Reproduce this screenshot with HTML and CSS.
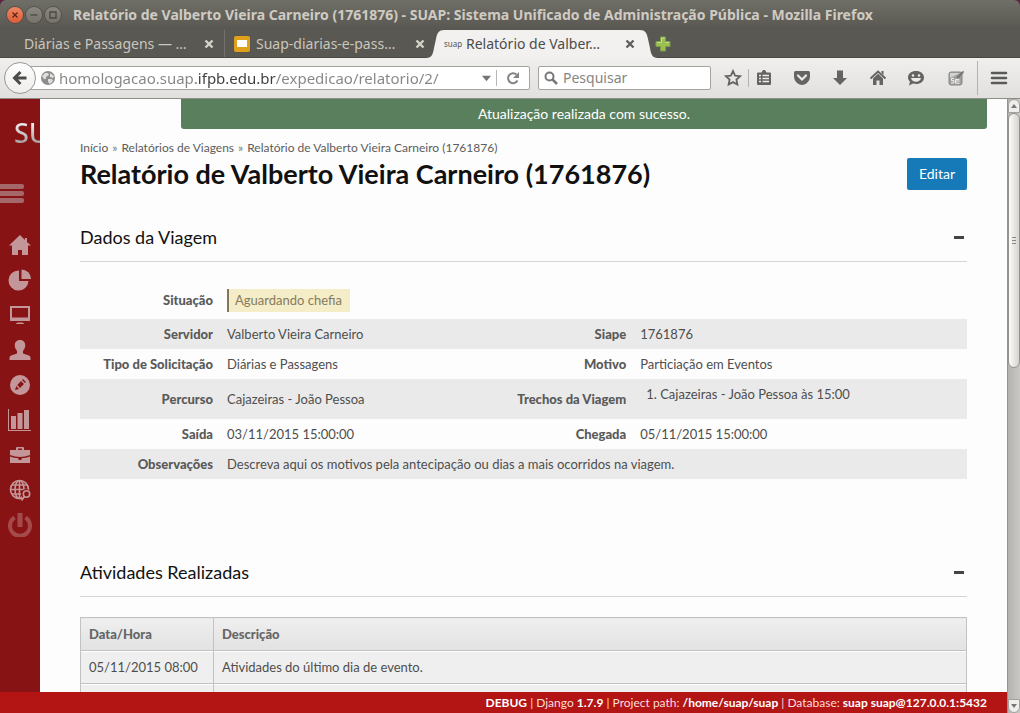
FILE: index.html
```html
<!DOCTYPE html>
<html lang="pt-BR">
<head>
<meta charset="utf-8">
<title>Relatório de Valberto Vieira Carneiro (1761876)</title>
<link rel="stylesheet" href="styles.css">
</head>
<body>
<div class="window">
  <header class="chrome">
    <div class="titlebar">
      <button class="win-btn win-close" aria-label="Fechar"><svg viewBox="0 0 16 16"><path d="M5.500 5.500l5 5M10.500 5.500l-5 5"/></svg></button>
      <button class="win-btn" aria-label="Minimizar"><svg viewBox="0 0 16 16"><path d="M4.500 8h7"/></svg></button>
      <button class="win-btn" aria-label="Maximizar"><svg viewBox="0 0 16 16"><path d="M5 5h6v6H5z"/></svg></button>
      <span class="window-title">Relatório de Valberto Vieira Carneiro (1761876) - SUAP: Sistema Unificado de Administração Pública - Mozilla Firefox</span>
    </div>
    <div class="tabs">
      <div class="tab tab-first"><span class="tab-label">Diárias e Passagens — …</span><button class="tab-close" aria-label="Fechar aba"><svg viewBox="0 0 10 10"><path d="M1.500 1.500l7 7M8.500 1.500l-7 7"/></svg></button></div>
      <div class="tab tab-second"><svg class="slides" viewBox="0 0 16 16"><rect width="16" height="16" rx="2" fill="#dfa01c"/><rect x="3" y="4" width="10" height="7" fill="#fff"/></svg><span class="tab-label">Suap-diarias-e-pass…</span><button class="tab-close" aria-label="Fechar aba"><svg viewBox="0 0 10 10"><path d="M1.500 1.500l7 7M8.500 1.500l-7 7"/></svg></button></div>
      <svg class="tab-edge" viewBox="0 0 18 28"><path d="M0 28C6 28 7 24 8 18L10 9C11 3 13 0 18 0V28z" fill="#f2f1f0"/></svg>
      <div class="tab tab-active"><span class="favicon">suap</span><span class="tab-label">Relatório de Valber…</span><button class="tab-close" aria-label="Fechar aba"><svg viewBox="0 0 10 10"><path d="M1.500 1.500l7 7M8.500 1.500l-7 7"/></svg></button></div>
      <svg class="tab-edge" viewBox="0 0 18 28"><path d="M18 28C12 28 11 24 10 18L8 9C7 3 5 0 0 0V28z" fill="#f2f1f0"/></svg>
      <button class="new-tab" aria-label="Nova aba"><svg viewBox="0 0 16 16"><path d="M5.500 1h5v4.500H15v5h-4.500V15h-5v-4.500H1v-5h4.500z" fill="#9bc04f" stroke="#7f9c4c"/><path d="M6.500 6.500V2h3M2 6.500h4.500M10.500 6.500H14" fill="none" stroke="#c5dc98"/></svg></button>
    </div>
    <div class="toolbar">
      <button class="back" aria-label="Voltar"><svg viewBox="0 0 16 16"><path d="M14.500 8H3M8.500 2L2.500 8l6 6" fill="none" stroke="#4b4b49" stroke-width="3"/></svg></button>
      <div class="urlbar">
        <svg class="globe" viewBox="0 0 16 16"><circle cx="8" cy="8" r="7" fill="#8d8d8b"/><path d="M2 6l3-3 3 0 1 2-3 2 0 2-2 0zM8 9l4 0 1 2-3 3-2-2zM10 3l4 3-1 2-3-1z" fill="#dededc"/></svg>
        <input class="url-input" type="text" aria-label="Endereço" value="homologacao.suap.ifpb.edu.br/expedicao/relatorio/2/">
        <button class="url-btn url-drop" aria-label="Histórico"><svg viewBox="0 0 10 10"><path d="M0 2h10L5 8z" fill="#747472"/></svg></button>
        <button class="url-btn url-reload" aria-label="Recarregar"><svg viewBox="0 0 14 14"><path d="M11.500 9.500A5 5 0 1 1 10.500 3.500" fill="none" stroke="#858583" stroke-width="2"/><path d="M13 1v6H7z" fill="#858583"/></svg></button>
      </div>
      <div class="search">
        <svg viewBox="0 0 14 14"><circle cx="5.500" cy="5.500" r="4" fill="none" stroke="#787876" stroke-width="2"/><path d="M8.500 8.500l4.500 4.500" stroke="#787876" stroke-width="2.500"/></svg>
        <input type="text" aria-label="Pesquisar" placeholder="Pesquisar">
      </div>
      <div class="tools">
        <button aria-label="Favoritar"><svg viewBox="0 0 18 18"><path d="M9 2l2.100 4.700 5 .5-3.700 3.400 1 5L9 13.100l-4.400 2.500 1-5L1.900 7.200l5-.5z" fill="none" stroke="#646462" stroke-width="1.800"/></svg></button>
        <span class="rule"></span>
        <button aria-label="Favoritos"><svg viewBox="0 0 18 18"><path d="M3 3.500h3.500L8 1h2l1.500 2.500H15q1 0 1 1V15q0 1-1 1H3q-1 0-1-1V4.500q0-1 1-1z" fill="#646462"/><path d="M4 6.500h2M4 9.500h2M4 12.500h2M7.500 6.500H14M7.500 9.500H14M7.500 12.500H14" stroke="#ecebea" stroke-width="1.700"/></svg></button>
        <button aria-label="Pocket"><svg viewBox="0 0 18 18"><path d="M2.500 2h13q1.500 0 1.500 1.500V8q0 3.500-3 6-5 4-10 0-3-2.500-3-6V3.500Q1 2 2.500 2z" fill="#646462"/><path d="M5 6.500l4 4 4-4" fill="none" stroke="#ecebea" stroke-width="2.200" stroke-linecap="round"/></svg></button>
        <button aria-label="Downloads"><svg viewBox="0 0 18 18"><path d="M6 1.500h6V9h4l-7 7-7-7h4z" fill="#646462"/></svg></button>
        <button aria-label="Página inicial"><svg viewBox="0 0 18 18"><path d="M1.500 9.500L9 2.500l7.500 7" fill="none" stroke="#646462" stroke-width="2"/><path d="M12.500 2h2v4l-2-2zM4 9.500l5-4.700 5 4.700V16h-3.500v-4.500h-3V16H4z" fill="#646462"/></svg></button>
        <button aria-label="Conversar"><svg viewBox="0 0 18 18"><path d="M9 2c4.500 0 8 2.600 8 6.500S13.500 15 9 15c-1 0-2-.2-3-.5L2 16.500l1-4C1.700 11.500 1 10 1 8.500 1 4.600 4.500 2 9 2z" fill="#646462"/><circle cx="6" cy="6.500" r="1.200" fill="#ecebea"/><circle cx="12" cy="6.500" r="1.200" fill="#ecebea"/><path d="M4 9h10q-1 3.800-5 3.800T4 9z" fill="#ecebea"/></svg></button>
        <button class="selenium" aria-label="Selenium"><svg viewBox="0 0 18 18"><rect x="2" y="3" width="13" height="13" rx="2" fill="#a1a1a0" stroke="#858583"/><path d="M3 4h10L3 9z" fill="#d2d2d0"/><path d="M9 8.500l6-6 2-.5-.5 2-5 5.500z" fill="#777775"/><path d="M7 9.500H4.500v2h2.300v2.500H4M12.500 12h-4v2.200h4M8.500 12v-1.500h3.800" fill="none" stroke="#eee" stroke-width="1"/></svg></button>
        <span class="rule rule-tall"></span>
        <button class="menu" aria-label="Menu"><svg viewBox="0 0 18 18"><path d="M2 4h14M2 9h14M2 14h14" stroke="#5a5a58" stroke-width="2.600" stroke-linecap="round"/></svg></button>
      </div>
    </div>
  </header>

  <div class="viewport">
    <div class="page">
      <div class="page-body">
        <aside class="sidebar">
          <a class="logo" href="#">SU</a>
          <button class="burger" aria-label="Alternar menu"><span></span><span></span><span></span></button>
          <nav class="side-nav">
            <a href="#" aria-label="Início"><svg viewBox="0 0 24 24"><path d="M12 2L1 12.500h3V22h6v-5h4v5h6v-9.500h3L19 9V5h-2v2z"/></svg></a>
            <a href="#" aria-label="Estatísticas"><svg viewBox="0 0 24 24"><path d="M11 2.500V13h9.500A10 10 0 1 1 11 2.500z"/><path d="M13.500 1.500A9.500 9.500 0 0 1 23 11h-9.500z"/></svg></a>
            <a href="#" aria-label="Computador"><svg viewBox="0 0 24 24"><path fill-rule="evenodd" d="M2 3h20v15H2zM4 5v9.500h16V5z"/><path d="M8 21q0-1.500 2-1.500h4q2 0 2 1.500z"/></svg></a>
            <a href="#" aria-label="Usuário"><svg viewBox="0 0 24 24"><path d="M12 2c3.500 0 5.200 2.300 5.200 5.500 0 2.500-1.200 4-2.200 5.500v2.500l6 2q1.500.5 1.500 2.500v2h-21v-2q0-2 1.500-2.500l6-2V13C8 11.500 6.800 10 6.800 7.500 6.800 4.300 8.500 2 12 2z"/></svg></a>
            <a href="#" aria-label="Editar perfil"><svg viewBox="0 0 24 24"><path fill-rule="evenodd" d="M12 2a10 10 0 1 1 0 20 10 10 0 0 1 0-20zM7 17l4-1-2.700-3zM9.300 12l2.700 3 4-4-3-3zM14 7l3 3 1-1-3-3z"/></svg></a>
            <a href="#" aria-label="Relatórios"><svg viewBox="0 0 24 24"><path d="M0 1h1v21h22v1H0zM3 8h5v13H3zM9.500 5h5v16h-5zM16 2h5v19h-5z"/></svg></a>
            <a href="#" aria-label="Administração"><svg viewBox="0 0 24 24"><path fill-rule="evenodd" d="M8 7V5q0-1 1-1h6q1 0 1 1v2h6v5q-10 4-20 0V7zM10 7h4V5.500h-4z"/><path d="M2 13.500q4 1.500 8.500 1.800V17h3v-1.700q4.500-.3 8.500-1.800V20H2z"/></svg></a>
            <a href="#" aria-label="Internet"><svg viewBox="0 0 24 24"><g class="line"><circle cx="11.500" cy="11.500" r="9"/><ellipse cx="11.500" cy="11.500" rx="4.500" ry="9"/><path d="M11.500 2v19M2 11.500h19M4 7h15M4 16h12"/></g><circle cx="18" cy="16" r="5" class="cut"/><g class="line"><circle cx="18.500" cy="16" r="3.200"/><path d="M16.500 18.500l-3 4"/></g></svg></a>
            <a class="power" href="#" aria-label="Sair"><svg viewBox="0 0 24 24"><path class="thick" d="M6.500 4.500a10 10 0 1 0 11 0"/><path d="M9.500 0h5v14h-5z"/></svg></a>
          </nav>
        </aside>
        <main class="content">
          <p class="alert" role="status">Atualização realizada com sucesso.</p>
          <div class="page-head">
            <div>
              <nav class="crumbs"><a href="#">Início</a><span>»</span><a href="#">Relatórios de Viagens</a><span>»</span><a href="#">Relatório de Valberto Vieira Carneiro (1761876)</a></nav>
              <h1>Relatório de Valberto Vieira Carneiro (1761876)</h1>
            </div>
            <a class="edit" href="#">Editar</a>
          </div>
          <section class="box">
            <div class="box-head"><h2>Dados da Viagem</h2><button class="collapse" aria-label="Recolher Dados da Viagem"></button></div>
            <table class="info">
              <colgroup><col class="c-label"><col class="c-value"><col class="c-label"><col></colgroup>
              <tbody>
              <tr class="status-row"><th>Situação</th><td colspan="3"><span class="badge">Aguardando chefia</span></td></tr>
              <tr><th>Servidor</th><td>Valberto Vieira Carneiro</td><th>Siape</th><td>1761876</td></tr>
              <tr><th>Tipo de Solicitação</th><td>Diárias e Passagens</td><th>Motivo</th><td>Particiação em Eventos</td></tr>
              <tr><th>Percurso</th><td>Cajazeiras - João Pessoa</td><th>Trechos da Viagem</th><td><ol><li>Cajazeiras - João Pessoa às 15:00</li></ol></td></tr>
              <tr><th>Saída</th><td>03/11/2015 15:00:00</td><th>Chegada</th><td>05/11/2015 15:00:00</td></tr>
              <tr><th>Observações</th><td colspan="3">Descreva aqui os motivos pela antecipação ou dias a mais ocorridos na viagem.</td></tr>
              </tbody>
            </table>
          </section>
          <section class="box">
            <div class="box-head"><h2>Atividades Realizadas</h2><button class="collapse" aria-label="Recolher Atividades Realizadas"></button></div>
            <table class="list">
              <thead><tr><th class="c-date">Data/Hora</th><th>Descrição</th></tr></thead>
              <tbody>
              <tr><td>05/11/2015 08:00</td><td>Atividades do último dia de evento.</td></tr>
              <tr><td></td><td></td></tr>
              </tbody>
            </table>
          </section>
        </main>
      </div>
      <footer class="debug"><strong>DEBUG</strong> | Django <strong>1.7.9</strong> | Project path: <strong>/home/suap/suap</strong> | Database: <strong>suap suap@127.0.0.1:5432</strong></footer>
    </div>
    <div class="scrollbar">
      <div class="arrow"><svg viewBox="0 0 6 4"><path d="M0 4l3-4 3 4z"/></svg></div>
      <div class="thumb"><i></i><i></i><i></i></div>
      <div class="arrow arrow-down"><svg viewBox="0 0 6 4"><path d="M0 0l3 4 3-4z"/></svg></div>
    </div>
  </div>
</div>
</body>
</html>
```

FILE: styles.css
```css
* { box-sizing: border-box; }
body { margin: 0; background: #5b2340; font-family: Lato, "Noto Sans", sans-serif; font-size: 14px; line-height: 20px; color: #4e4e4e; }
button { border: 0; padding: 0; background: none; font: inherit; display: flex; align-items: center; justify-content: center; }
input { border: 0; padding: 0; outline: 0; background: none; font: inherit; min-width: 0; }
a { color: inherit; text-decoration: none; }
svg { display: block; flex: none; }
h1, h2, p, ol { margin: 0; }

.window { display: flex; flex-direction: column; height: 100vh; overflow: hidden; }

/* browser frame */
.chrome { flex: none; font-family: "Noto Sans", "Open Sans", sans-serif; background: linear-gradient(#706f67, #5a5852 28px, #595751); border-radius: 6px 6px 0 0; }
.titlebar { display: flex; align-items: center; gap: 3px; height: 30px; padding-left: 7px; }
.win-btn { width: 16px; height: 16px; border-radius: 50%; background: linear-gradient(#8a8880, #74726b); box-shadow: 0 0 0 1px #504e48; }
.win-btn svg { width: 16px; height: 16px; fill: none; stroke: #4a4843; stroke-width: 1.3; }
.win-close { background: linear-gradient(#f08763, #dd5c38); }
.win-close svg { stroke: #5e2414; }
.window-title { margin-left: 9px; color: #cfcbc3; font-size: 14px; font-weight: 700; white-space: nowrap; }
.tabs { display: flex; height: 28px; font-size: 14px; color: #c9c6be; border-bottom: 1px solid #4a4944; }
.tab { display: flex; align-items: center; white-space: nowrap; }
.tab-label { flex: 1; }
.tab-first { width: 225px; padding: 0 10px 0 24px; border-right: 1px solid #73716b; }
.tab-second { width: 201px; padding: 0 1px 0 9px; }
.slides { width: 16px; height: 16px; margin-right: 6px; }
.tab-close svg { width: 10px; height: 10px; fill: none; stroke: #d5d2ca; stroke-width: 2.4; }
.tab-edge { width: 18px; height: 28px; }
.tab-active { width: 196px; height: 28px; padding-right: 5px; color: #4c4c4b; background: #f2f1f0; }
.tab-active .tab-close svg { stroke: #5f5f5d; }
.favicon { width: 22px; font-size: 8px; color: #555; }
.new-tab { margin-left: -3px; }
.new-tab svg { width: 16px; height: 16px; }
.toolbar { display: flex; align-items: center; height: 41px; padding: 0 12px 0 4px; background: linear-gradient(#f0efee, #e2e0de); border-bottom: 1px solid #8f8d8a; }
.back { position: relative; z-index: 1; width: 32px; height: 32px; margin-right: -16px; border: 1px solid #999794; border-radius: 50%; background: linear-gradient(#fefefe, #efeeed); }
.back svg { width: 16px; height: 16px; }
.urlbar { display: flex; align-items: center; flex: 1; height: 24px; padding-left: 19px; background: #fff; border: 1px solid #a5a3a0; border-radius: 2px; }
.globe { width: 16px; height: 16px; }
.url-input { flex: 1; margin-left: 3px; font-size: 15px; color: transparent; caret-color: #444; background: linear-gradient(90deg, #858583 137px, #3d3d3c 137px, #3d3d3c 217px, #858583 217px); background-clip: text; -webkit-background-clip: text; }
.url-drop { width: 20px; }
.url-drop svg { width: 9px; height: 9px; }
.url-reload { width: 33px; height: 16px; border-left: 1px solid #b9b7b4; }
.url-reload svg { width: 14px; height: 14px; }
.search { display: flex; align-items: center; gap: 5px; width: 173px; height: 24px; margin-left: 8px; padding-left: 5px; background: #fff; border: 1px solid #a5a3a0; border-radius: 2px; }
.search svg { width: 14px; height: 14px; }
.search input { flex: 1; font-size: 14px; }
.search input::placeholder { color: #858583; opacity: 1; }
.tools { display: flex; align-items: center; margin-left: 13px; gap: 20px; }
.tools svg { width: 18px; height: 18px; }
.rule { width: 1px; height: 18px; margin: 0 -14px; background: #b5b3b0; }
.rule-tall { height: 34px; margin: 0 -8px; }
.selenium { margin-left: 2px; }

/* web page */
.viewport { flex: 1; display: flex; min-height: 0; }
.page { flex: 1; display: flex; flex-direction: column; min-width: 0; background: #fdfdfd; }
.page-body { flex: 1; display: flex; min-height: 0; overflow: hidden; }
.sidebar { flex: none; width: 40px; overflow: hidden; background: #871314; }
.logo { display: block; padding: 16px 0 0 14px; overflow: hidden; font-family: "Noto Sans", sans-serif; font-size: 27px; font-weight: 500; line-height: 36px; background: linear-gradient(#eee 24px, #a8a0a0 44px); background-clip: text; -webkit-background-clip: text; color: transparent; }
.burger { flex-direction: column; gap: 2px; width: 24px; margin-top: 33px; }
.burger span { width: 24px; height: 5px; background: #a5686a; border-radius: 0 2px 2px 0; }
.side-nav { display: flex; flex-direction: column; align-items: flex-start; margin-top: 24px; padding-left: 8px; }
.side-nav a { display: flex; align-items: center; height: 35px; }
.side-nav svg { width: 24px; height: 24px; fill: #c39799; }
.side-nav .line { fill: none; stroke: #c39799; stroke-width: 1.6; }
.side-nav .cut { fill: #871314; }
.side-nav .power svg { fill: #a54a4b; }
.power .thick { fill: none; stroke: #a54a4b; stroke-width: 4; }
.content { flex: 1; min-width: 0; padding: 0 40px; }
.alert { height: 30px; margin: 0 -20px 0 101px; color: #fff; line-height: 30px; text-align: center; background: #5a7f5c; border-radius: 0 0 3px 3px; }
.page-head { display: flex; justify-content: space-between; align-items: flex-end; margin-top: 10px; }
.crumbs { display: flex; gap: 4px; font-size: 12px; line-height: 18px; color: #5c5c5c; }
.crumbs span { color: #777; }
h1 { font-size: 27px; line-height: 33px; font-weight: 700; color: #111; }
.edit { padding: 6px 12px; color: #fff; background: #177ab8; border-radius: 2px; }
.box { margin-top: 24px; }
.box + .box { margin-top: 70px; }
.box-head { display: flex; justify-content: space-between; align-items: center; height: 48px; padding-right: 3px; border-bottom: 1px solid #d4d4d4; }
h2 { margin-bottom: 2px; font-size: 18px; line-height: 24px; font-weight: 400; color: #111; }
.collapse { width: 10px; height: 3px; background: #444; }
.info { width: 100%; margin-top: 19px; font-size: 13px; table-layout: fixed; border-collapse: collapse; }
.c-label { width: 140px; }
.c-value { width: 30.8%; }
.info th, .info td { padding: 5px 7px; text-align: left; }
.info th { text-align: right; font-weight: 900; color: #5a5a5a; }
.info tr:nth-child(even) { background: #eaeaea; }
.status-row { height: 38px; }
.badge { display: inline-block; padding: 1px 8px 2px 6px; font-size: 13px; color: #857b5c; background: #f5ecc8; border-left: 2px solid #82775a; }
.info ol { padding-left: 20px; margin-bottom: 10px; }
.list { width: 100%; margin-top: 20px; font-size: 13px; border-collapse: collapse; }
.list th, .list td { height: 33px; padding: 6px 8px; text-align: left; white-space: nowrap; border: 1px solid #c2c2c2; }
.list th { font-weight: 900; color: #666; background: linear-gradient(#efefef, #e2e2e2); }
.list td { background: #efefef; border-top-color: #d5d5d5; box-shadow: inset 0 1px #fff; }
.list .c-date { width: 133px; }
.debug { flex: none; height: 21px; padding-right: 20px; color: #fbdcdc; font-size: 12px; line-height: 21px; text-align: right; background: #b31414; }
.debug strong { font-weight: 700; color: #fff; }

/* scrollbar */
.scrollbar { flex: none; display: flex; flex-direction: column; width: 13px; background: linear-gradient(90deg, #b3b2ae, #c9c8c4); border-left: 1px solid #95938f; }
.arrow { display: flex; align-items: center; justify-content: center; height: 14px; background: #efeeed; border: 1px solid #a3a19d; border-radius: 6px 6px 0 0; }
.arrow svg { width: 6px; height: 4px; fill: #777; }
.arrow-down { margin-top: auto; border-radius: 0 0 6px 6px; }
.thumb { display: flex; flex-direction: column; align-items: center; justify-content: center; gap: 2px; height: 41.5%; background: linear-gradient(90deg, #fbfbfa, #d5d3d0); border: 1px solid #95938f; border-radius: 6px; }
.thumb i { width: 4px; height: 1px; background: #8a8885; }
```
